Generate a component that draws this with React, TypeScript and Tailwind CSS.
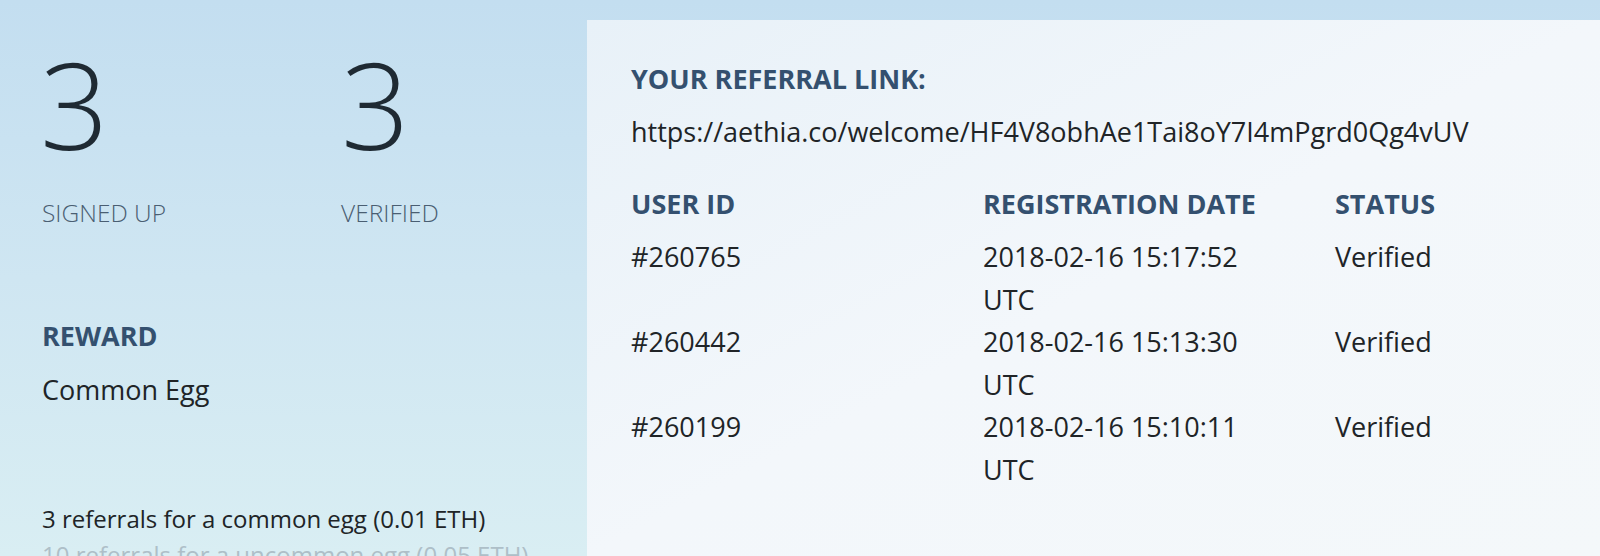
import React from "react";

const rows = [
  { id: "#260765", date: "2018-02-16 15:17:52 UTC", status: "Verified" },
  { id: "#260442", date: "2018-02-16 15:13:30 UTC", status: "Verified" },
  { id: "#260199", date: "2018-02-16 15:10:11 UTC", status: "Verified" },
];

export default function App() {
  return (
    <div
      className="w-[1600px] h-[556px] overflow-hidden flex bg-gradient-to-b from-[#c3def0] via-[#cfe6f2] to-[#d9eef3] text-[#222a30]"
      style={{ fontFamily: '"Open Sans", "Noto Sans", sans-serif' }}
    >
      {/* Left column */}
      <div className="w-[587px] shrink-0 pl-[42px] pt-[44px]">
        <div className="grid grid-cols-[299px_1fr]">
          <div>
            <div className="text-[120px] leading-none font-light text-[#1f2a33] -ml-[2px]">3</div>
            <div className="mt-[31px] text-[24.5px] leading-[36px] font-light text-[#4a5e72]">SIGNED UP</div>
          </div>
          <div>
            <div className="text-[120px] leading-none font-light text-[#1f2a33]">3</div>
            <div className="mt-[31px] text-[24.5px] leading-[36px] font-light text-[#4a5e72]">VERIFIED</div>
          </div>
        </div>
        <div className="mt-[84px] text-[27px] leading-[42.5px] font-bold text-[#34506f]">REWARD</div>
        <div className="mt-[11px] text-[27px] leading-[42.5px] text-[#202427]">Common Egg</div>
        <div className="mt-[90px] text-[24px] leading-[36px]">
          <div className="text-[#202427]">3 referrals for a common egg (0.01 ETH)</div>
          <div className="text-[#aebfc8]">10 referrals for a uncommon egg (0.05 ETH)</div>
        </div>
      </div>

      {/* Right panel */}
      <div className="flex-1 mt-[20px] bg-gradient-to-br from-[#e8f1f8] via-[#f3f7fb] to-[#f4f8fa] pl-[44px] pt-[38px] text-[27px] leading-[42.5px]">
        <div className="font-bold text-[#34506f]">YOUR REFERRAL LINK:</div>
        <div className="mt-[10.5px] text-[#202427]">https://aethia.co/welcome/HF4V8obhAe1Tai8oY7I4mPgrd0Qg4vUV</div>
        <div className="mt-[29.5px] grid grid-cols-[352px_352px_1fr] font-bold text-[#34506f]">
          <div>USER ID</div>
          <div>REGISTRATION DATE</div>
          <div>STATUS</div>
        </div>
        <div className="mt-[10.5px] text-[#202427]">
          {rows.map((r) => (
            <div key={r.id} className="grid grid-cols-[352px_352px_1fr]">
              <div>{r.id}</div>
              <div className="pr-[60px]">{r.date}</div>
              <div>{r.status}</div>
            </div>
          ))}
        </div>
      </div>
    </div>
  );
}
